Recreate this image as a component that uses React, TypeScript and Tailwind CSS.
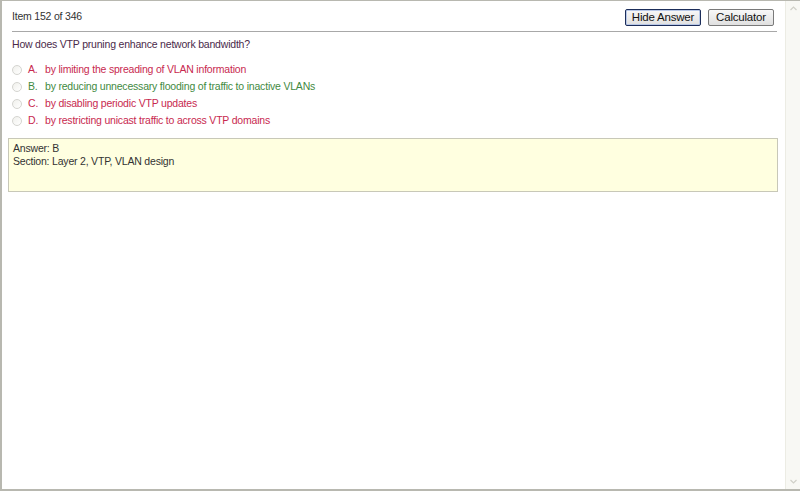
import React from "react";

const options = [
  { l: "A.", t: "by limiting the spreading of VLAN information", c: "text-[#c8294f]" },
  { l: "B.", t: "by reducing unnecessary flooding of traffic to inactive VLANs", c: "text-[#3f8a3f]" },
  { l: "C.", t: "by disabling periodic VTP updates", c: "text-[#c8294f]" },
  { l: "D.", t: "by restricting unicast traffic to across VTP domains", c: "text-[#c8294f]" },
];

export default function App() {
  return (
    <div
      className="w-[800px] h-[491px] flex bg-white border-l-2 border-b-2 border-t border-[#b8b8b0] overflow-hidden text-[10.5px] leading-[13px] tracking-[-0.2px]"
      style={{ fontFamily: '"Liberation Sans", Arial, sans-serif' }}
    >
      <div className="flex-1 flex flex-col pl-[10px] pr-[8px]">
        <div className="flex items-center justify-between h-[31px] pr-[3px] border-b border-[#a8a8a8] pt-[1px]">
          <span className="text-[#333]">Item 152 of 346</span>
          <div className="flex gap-[7px] pt-[1px]">
            <button className="h-[17px] w-[76px] border border-[#1c2d5a] rounded-[2px] bg-gradient-to-b from-[#f8f8f8] to-[#e0e0e0] text-[#111] text-[11.5px] leading-[14px] shadow-[inset_0_0_0_1px_#b8c8e8]">
              Hide Answer
            </button>
            <button className="h-[17px] w-[66px] border border-[#7a7a7a] rounded-[2px] bg-gradient-to-b from-[#f8f8f8] to-[#e0e0e0] text-[#111] text-[11.5px] leading-[14px]">
              Calculator
            </button>
          </div>
        </div>
        <div className="mt-[6px] text-[#4a2a4a]">How does VTP pruning enhance network bandwidth?</div>
        <div className="mt-[10px] flex flex-col">
          {options.map((o) => (
            <div key={o.l} className="flex items-center h-[17px]">
              <span className="w-[10px] h-[10px] rounded-full border border-[#d4d4d0] bg-gradient-to-br from-[#f0f0ec] to-white" />
              <span className={`ml-[6px] w-[17px] ${o.c}`}>{o.l}</span>
              <span className={o.c}>{o.t}</span>
            </div>
          ))}
        </div>
        <div className="mt-[9px] -ml-[4px] mr-[-1px] h-[54px] bg-[#ffffe0] border border-[#c8c8b8] px-[4px] pt-[3px] text-[#333]">
          <div>Answer: B</div>
          <div>Section: Layer 2, VTP, VLAN design</div>
        </div>
      </div>
      <div className="w-[15px] flex flex-col justify-between bg-[#f8f8f4] border-l border-[#ecece4]">
        <div className="h-[15px] flex items-center justify-center">
          <svg width="7" height="5" viewBox="0 0 7 5"><path d="M0.5 4 L3.5 1 L6.5 4" fill="none" stroke="#d0d0c8" strokeWidth="1.2" /></svg>
        </div>
        <div className="h-[15px] flex items-center justify-center">
          <svg width="7" height="5" viewBox="0 0 7 5"><path d="M0.5 1 L3.5 4 L6.5 1" fill="none" stroke="#d0d0c8" strokeWidth="1.2" /></svg>
        </div>
      </div>
    </div>
  );
}
